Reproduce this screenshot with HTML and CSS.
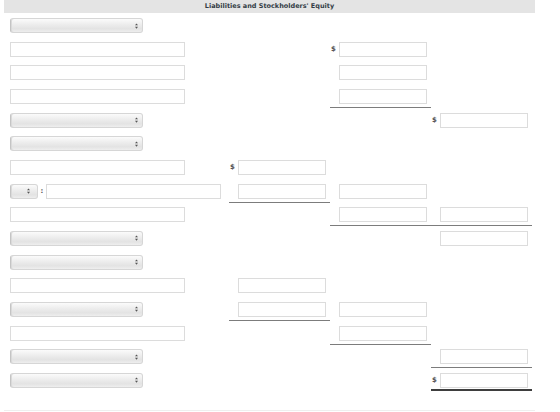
FILE: index.html
```html
<!DOCTYPE html>
<html lang="en">
<head>
    <meta charset="UTF-8">
    <title>Liabilities and Stockholders' Equity</title>
    <link rel="stylesheet" href="styles.css">
</head>
<body>
    <div class="sheet">
        <div class="sheet-title">Liabilities and Stockholders' Equity</div>

        <div class="rows">
            <!-- 1 -->
            <div class="row">
                <div class="a"><span class="pick"><svg class="arrows" viewBox="0 0 4 7"><path d="M2 0L4 2.6H0z M2 7L4 4.4H0z"/></svg></span></div>
            </div>
            <!-- 2 -->
            <div class="row">
                <div class="a"><input class="field" type="text"></div>
                <div class="amt c"><span class="cur">$</span><input class="num" type="text"></div>
            </div>
            <!-- 3 -->
            <div class="row">
                <div class="a"><input class="field" type="text"></div>
                <div class="amt c"><span class="cur"></span><input class="num" type="text"></div>
            </div>
            <!-- 4 -->
            <div class="row">
                <div class="a"><input class="field" type="text"></div>
                <div class="amt c sum"><span class="cur"></span><input class="num" type="text"></div>
            </div>
            <!-- 5 -->
            <div class="row">
                <div class="a"><span class="pick"><svg class="arrows" viewBox="0 0 4 7"><path d="M2 0L4 2.6H0z M2 7L4 4.4H0z"/></svg></span></div>
                <div class="amt d"><span class="cur">$</span><input class="num" type="text"></div>
            </div>
            <!-- 6 -->
            <div class="row">
                <div class="a"><span class="pick"><svg class="arrows" viewBox="0 0 4 7"><path d="M2 0L4 2.6H0z M2 7L4 4.4H0z"/></svg></span></div>
            </div>
            <!-- 7 -->
            <div class="row">
                <div class="a"><input class="field" type="text"></div>
                <div class="amt b"><span class="cur">$</span><input class="num" type="text"></div>
            </div>
            <!-- 8 -->
            <div class="row">
                <div class="a combo">
                    <span class="pick short"><svg class="arrows" viewBox="0 0 4 7"><path d="M2 0L4 2.6H0z M2 7L4 4.4H0z"/></svg></span>
                    <span class="colon">:</span>
                    <input class="field" type="text">
                </div>
                <div class="amt b sum"><span class="cur"></span><input class="num" type="text"></div>
                <div class="amt c"><span class="cur"></span><input class="num" type="text"></div>
            </div>
            <!-- 9 -->
            <div class="row">
                <div class="a"><input class="field" type="text"></div>
                <div class="amt c sum"><span class="cur"></span><input class="num" type="text"></div>
                <div class="amt d sum"><span class="cur"></span><input class="num" type="text"></div>
            </div>
            <!-- 10 -->
            <div class="row">
                <div class="a"><span class="pick"><svg class="arrows" viewBox="0 0 4 7"><path d="M2 0L4 2.6H0z M2 7L4 4.4H0z"/></svg></span></div>
                <div class="amt d"><span class="cur"></span><input class="num" type="text"></div>
            </div>
            <!-- 11 -->
            <div class="row">
                <div class="a"><span class="pick"><svg class="arrows" viewBox="0 0 4 7"><path d="M2 0L4 2.6H0z M2 7L4 4.4H0z"/></svg></span></div>
            </div>
            <!-- 12 -->
            <div class="row">
                <div class="a"><input class="field" type="text"></div>
                <div class="amt b"><span class="cur"></span><input class="num" type="text"></div>
            </div>
            <!-- 13 -->
            <div class="row">
                <div class="a"><span class="pick"><svg class="arrows" viewBox="0 0 4 7"><path d="M2 0L4 2.6H0z M2 7L4 4.4H0z"/></svg></span></div>
                <div class="amt b sum"><span class="cur"></span><input class="num" type="text"></div>
                <div class="amt c"><span class="cur"></span><input class="num" type="text"></div>
            </div>
            <!-- 14 -->
            <div class="row">
                <div class="a"><input class="field" type="text"></div>
                <div class="amt c sum"><span class="cur"></span><input class="num" type="text"></div>
            </div>
            <!-- 15 -->
            <div class="row">
                <div class="a"><span class="pick"><svg class="arrows" viewBox="0 0 4 7"><path d="M2 0L4 2.6H0z M2 7L4 4.4H0z"/></svg></span></div>
                <div class="amt d sum"><span class="cur"></span><input class="num" type="text"></div>
            </div>
            <!-- 16 -->
            <div class="row">
                <div class="a"><span class="pick"><svg class="arrows" viewBox="0 0 4 7"><path d="M2 0L4 2.6H0z M2 7L4 4.4H0z"/></svg></span></div>
                <div class="amt d total"><span class="cur">$</span><input class="num" type="text"></div>
            </div>
        </div>
    </div>
</body>
</html>
```

FILE: styles.css
```css
body {
    margin: 0;
    background-color: white;
    font-family: "DejaVu Sans", Verdana, sans-serif;
}

.sheet {
    width: 531px;
    margin-left: 4px;
    height: 410px;
    border-bottom: 1px solid #efefef;
}

.sheet-title {
    height: 13px;
    line-height: 13px;
    background-color: #e4e4e4;
    color: #343d46;
    font-size: 6.5px;
    font-weight: bold;
    text-align: center;
}

.rows {
    padding: 5px 0 0 6px;
}

.row {
    display: grid;
    grid-template-columns: 219px 101px 101px 101px;
    height: 23.67px;
    align-items: start;
}

.a { grid-column: 1; }
.b { grid-column: 2; }
.c { grid-column: 3; }
.d { grid-column: 4; }

.field {
    display: block;
    box-sizing: border-box;
    width: 175px;
    height: 15px;
    margin: 0;
    padding: 0;
    border: 1px solid #dcdcdc;
    background-color: white;
}

.pick {
    display: flex;
    align-items: center;
    justify-content: flex-end;
    box-sizing: border-box;
    width: 133px;
    height: 15px;
    padding-right: 4px;
    border: 1px solid #d6d6d6;
    border-left-color: #c4c4c4;
    border-radius: 3px;
    background: linear-gradient(#fbfbfb, #ececec 45%, #e3e3e3 75%, #eeeeee);
    box-shadow: inset 1px 0 0 #dadada;
}

.pick.short {
    width: 28px;
    padding-right: 7px;
}

.arrows {
    width: 3px;
    height: 6px;
    fill: #555;
}

.combo {
    display: flex;
    align-items: center;
}

.colon {
    width: 8px;
    text-align: center;
    font-size: 7px;
    font-weight: bold;
    color: #555;
}

.amt {
    display: flex;
    align-items: center;
    padding-left: 1px;
}

.cur {
    width: 8px;
    font-size: 7px;
    font-weight: bold;
    color: #555;
    line-height: 15px;
}

.num {
    display: block;
    box-sizing: border-box;
    width: 88px;
    height: 15px;
    margin: 0;
    padding: 0;
    border: 1px solid #dcdcdc;
    background-color: white;
}

.sum {
    width: 100px;
    padding-bottom: 3px;
    border-bottom: 1px solid #7c7c7c;
}

.total {
    width: 100px;
    padding-bottom: 1px;
    border-bottom: 2px solid #3e3e3e;
}
```
